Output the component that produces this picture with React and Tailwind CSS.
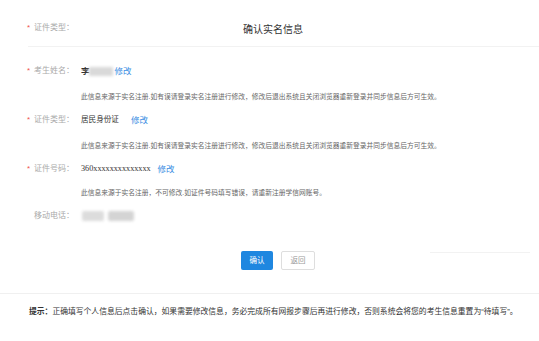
export default function App() {
  const font = { fontFamily: '"Liberation Sans", "Noto Sans CJK SC", sans-serif' };
  const Label = ({ req, children }) => (
    <div className="flex w-[74px] shrink-0 items-center justify-end whitespace-nowrap text-[8px] text-[#aaa]">
      {req && <span className="mr-[4px] text-[8px] text-[#f0524f]">*</span>}
      <span>{children}</span>
    </div>
  );
  const Desc = ({ children, className }) => (
    <div className={"flex h-[12px] items-center pl-[81px] text-[6.75px] text-[#666] " + className}>{children}</div>
  );
  return (
    <div className="relative h-[341px] w-[539px] overflow-hidden bg-white" style={font}>
      <div className="flex h-[46px]">
        <div className="mt-[21px] flex h-[14px] items-center">
          <Label req>证件类型：</Label>
        </div>
        <div className="ml-[169px] mt-[23px] text-[10px] leading-[14px] text-[#333]">确认实名信息</div>
      </div>
      <div className="ml-[28px] h-px bg-[#f2f2f2]"></div>

      <div className="mt-[17px] flex h-[14px] items-center">
        <Label req>考生姓名：</Label>
        <div className="ml-[7px] flex items-center text-[8.5px] font-semibold text-[#333]">
          <span>李</span>
          <span className="ml-[-1px] h-[9px] w-[24px] bg-[#d9d9d9] blur-[1.5px]"></span>
        </div>
        <span className="ml-[2px] text-[8.5px] text-[#3b8ee3]">修改</span>
      </div>
      <Desc className="mt-[13px]">此信息来源于实名注册.如有误请登录实名注册进行修改，修改后退出系统且关闭浏览器重新登录并同步信息后方可生效。</Desc>

      <div className="mt-[10px] flex h-[14px] items-center">
        <Label req>证件类型：</Label>
        <span className="ml-[7px] text-[7.6px] text-[#333]">居民身份证</span>
        <span className="ml-[12px] text-[8.5px] text-[#3b8ee3]">修改</span>
      </div>
      <Desc className="mt-[13px]">此信息来源于实名注册.如有误请登录实名注册进行修改，修改后退出系统且关闭浏览器重新登录并同步信息后方可生效。</Desc>

      <div className="mt-[10px] flex h-[14px] items-center">
        <Label req>证件号码：</Label>
        <span className="ml-[7px] text-[8.2px] text-[#333]" style={{ fontFamily: '"Liberation Serif", "Noto Sans CJK SC", serif' }}>360xxxxxxxxxxxxxx</span>
        <span className="ml-[7px] text-[8.5px] text-[#3b8ee3]">修改</span>
      </div>
      <Desc className="mt-[11px]">此信息来源于实名注册，不可修改.如证件号码填写错误，请重新注册学信网账号。</Desc>

      <div className="mt-[10px] flex h-[14px] items-center">
        <Label>移动电话：</Label>
        <div className="ml-[8px] flex items-center gap-[4px]">
          <span className="h-[10px] w-[22px] rounded-[2px] bg-[#dcdcdc] blur-[1.5px]"></span>
          <span className="h-[10px] w-[26px] rounded-[2px] bg-[#d4d4d4] blur-[1.5px]"></span>
        </div>
      </div>

      <div className="relative mt-[28px] flex h-[19px]">
        <div className="ml-[241px] flex h-[19px] w-[32px] items-center justify-center rounded-[2px] bg-[#1f87e0] text-[7.5px] text-white">确认</div>
        <div className="ml-[8px] flex h-[19px] w-[34px] items-center justify-center rounded-[2px] border border-[#dedede] bg-white text-[7.5px] text-[#999]">返回</div>
        <div className="absolute left-[430px] top-[1px] h-px w-[100px] bg-[#f2f2f2]"></div>
      </div>

      <div className="mt-[23px] border-t border-[#f0f0f0]"></div>
      <div className="mt-[12px] flex h-[12px] items-center pl-[29px] text-[7.8px] text-[#333]">
        <span className="font-bold">提示：</span>
        <span>正确填写个人信息后点击确认，如果需要修改信息，务必完成所有网报步骤后再进行修改，否则系统会将您的考生信息重置为“待填写”。</span>
      </div>
    </div>
  );
}
